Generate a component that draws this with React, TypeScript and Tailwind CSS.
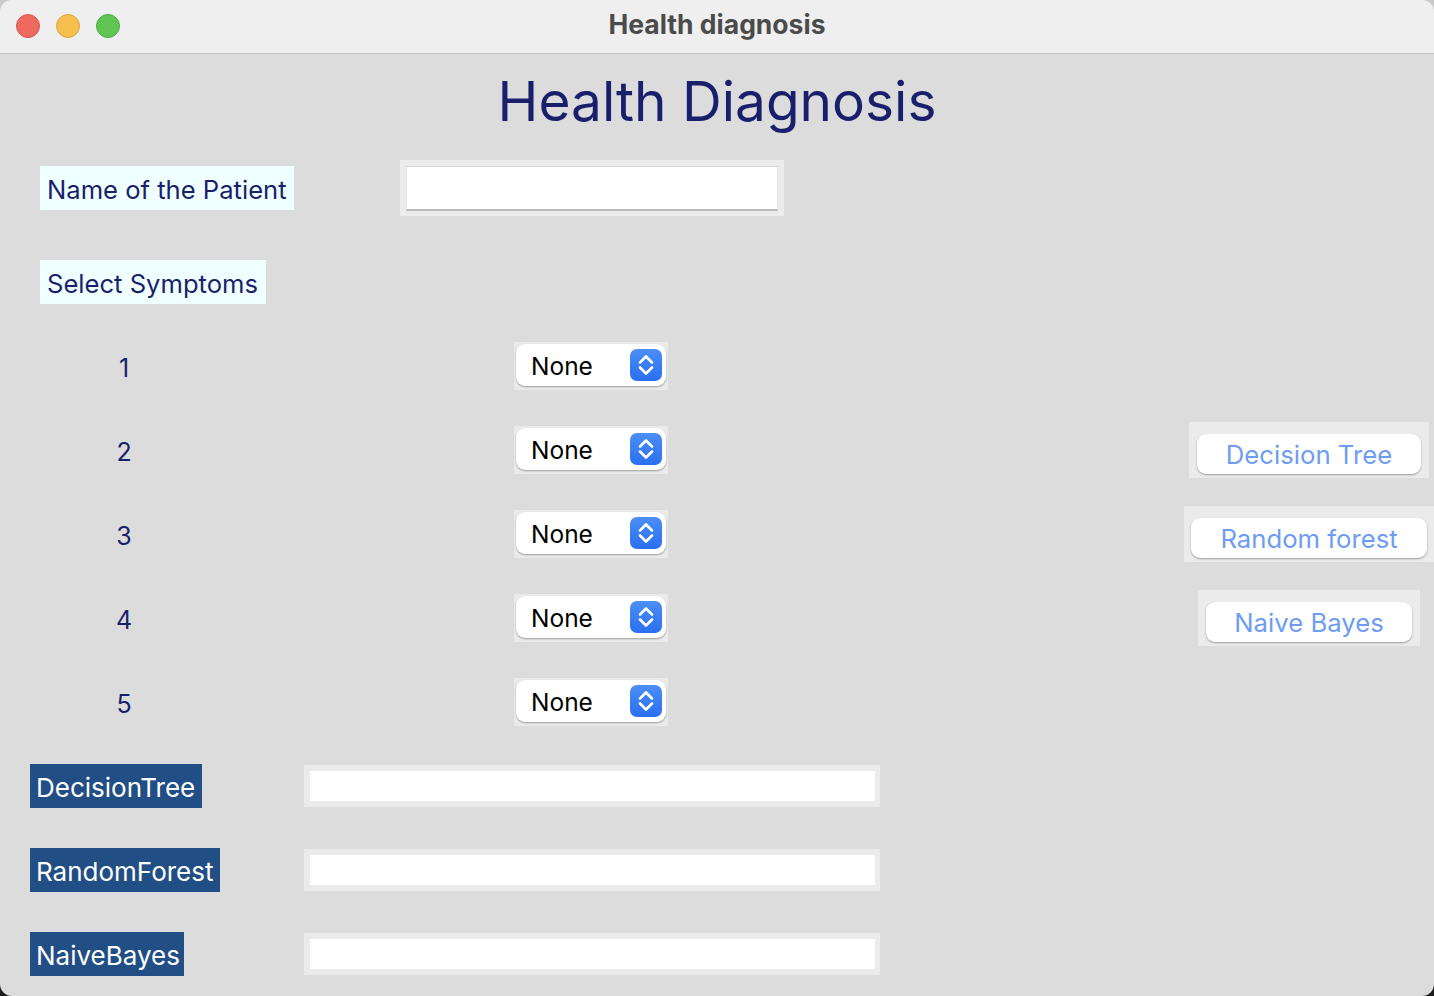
import React from "react";

const NAVY = "text-[#1a1f6c]";

function Stepper() {
  return (
    <div className="w-[32px] h-[32px] rounded-[7px] bg-[linear-gradient(to_bottom,#4b8ff7,#2a6ff0)] flex items-center justify-center">
      <svg width="20" height="26" viewBox="0 0 20 26" fill="none">
        <path d="M4 10.5 L10 4.5 L16 10.5" stroke="white" strokeWidth="2.6" strokeLinecap="round" strokeLinejoin="round" />
        <path d="M4 15.5 L10 21.5 L16 15.5" stroke="white" strokeWidth="2.6" strokeLinecap="round" strokeLinejoin="round" />
      </svg>
    </div>
  );
}

function SelectBox() {
  return (
    <div className="bg-[#ebebeb] pt-[2px] px-[2px] pb-[4px]">
      <div className="w-[150px] h-[42px] bg-white rounded-[9px] shadow-[0_1px_2px_rgba(0,0,0,0.35)] flex items-center justify-between pl-[15px] pr-[4px]">
        <span className="text-[24.5px] text-black leading-none pt-[3px]">None</span>
        <Stepper />
      </div>
    </div>
  );
}

function ActionButton({ label, outerW, innerW }: { label: string; outerW: string; innerW: string }) {
  return (
    <div className={`bg-[#ebebeb] pt-[12px] pb-[4px] flex justify-center ${outerW}`}>
      <div className={`h-[40px] bg-white rounded-[9px] shadow-[0_1px_2px_rgba(0,0,0,0.35)] flex items-center justify-center ${innerW}`}>
        <span className="text-[25.7px] text-[#6e9cf4] leading-none pt-[1px]">{label}</span>
      </div>
    </div>
  );
}

function OutputEntry() {
  return (
    <div className="bg-[#ebebeb] w-[576px] h-[42px] pt-[6px] pl-[6px] pr-[5px] pb-[6px]">
      <div className="w-full h-full bg-white" />
    </div>
  );
}

export default function App() {
  const rows = [1, 2, 3, 4, 5];
  const buttons: Record<number, { label: string; outerW: string; innerW: string }> = {
    2: { label: "Decision Tree", outerW: "w-[240px]", innerW: "w-[224px]" },
    3: { label: "Random forest", outerW: "w-[250px]", innerW: "w-[236px]" },
    4: { label: "Naive Bayes", outerW: "w-[222px]", innerW: "w-[206px]" },
  };
  const results = [
    { label: "DecisionTree", w: "w-[172px]" },
    { label: "RandomForest", w: "w-[190px]" },
    { label: "NaiveBayes", w: "w-[154px]" },
  ];
  return (
    <div
      className="w-[1434px] h-[996px] bg-[linear-gradient(to_bottom,#c9c9c9_50%,#1d1d1d_50%)] overflow-hidden"
      style={{ fontFamily: "Inter, 'Noto Sans', sans-serif" }}
    >
      <div className="w-full h-full rounded-[12px] overflow-hidden bg-[#dcdcdc] flex flex-col">
        {/* Title bar */}
        <div className="h-[54px] shrink-0 bg-[#efefef] border-b border-[#c4c4c4] relative flex items-center">
          <div className="flex items-center gap-[16px] pl-[16px] pb-[1px]">
            <div className="w-[24px] h-[24px] rounded-full bg-[#ee6a5f] border border-[#d8574c]" />
            <div className="w-[24px] h-[24px] rounded-full bg-[#f5bf4f] border border-[#dba53a]" />
            <div className="w-[24px] h-[24px] rounded-full bg-[#61c554] border border-[#4eaa42]" />
          </div>
          <div className="absolute inset-0 flex items-center justify-center pointer-events-none pb-[4px]">
            <span className="text-[26.5px] font-bold text-[#4b4b4b] leading-none">Health diagnosis</span>
          </div>
        </div>

        {/* Heading */}
        <div className="h-[92px] shrink-0 flex items-center justify-center">
          <h1 className={`text-[55px] leading-none ${NAVY} pt-[2px]`}>Health Diagnosis</h1>
        </div>

        {/* Name row */}
        <div className="h-[84px] shrink-0 flex items-center">
          <div className="ml-[40px] w-[254px] h-[44px] bg-[#f0ffff] flex items-center pl-[7px]">
            <span className={`text-[25.6px] leading-none ${NAVY} pt-[4px]`}>Name of the Patient</span>
          </div>
          <div className="ml-[106px] bg-[#ebebeb] w-[384px] h-[56px] p-[6px] pb-[5px]">
            <div className="w-full h-full bg-white border-t border-[#d6d6d6] border-b-2 border-b-[#b9b9b9] border-x border-x-[#e2e2e2]" />
          </div>
        </div>

        {/* Select symptoms row */}
        <div className="h-[84px] mt-[10px] shrink-0 flex items-center">
          <div className="ml-[40px] w-[226px] h-[44px] bg-[#f0ffff] flex items-center pl-[7px]">
            <span className={`text-[25.6px] leading-none ${NAVY} pt-[4px]`}>Select Symptoms</span>
          </div>
        </div>

        {/* Symptom rows */}
        {rows.map((n) => (
          <div key={n} className="h-[84px] shrink-0 flex items-center">
            <div className={`ml-[100px] w-[48px] text-center text-[25px] leading-none ${NAVY} pt-[5px]`}>{n}</div>
            <div className="ml-[366px]">
              <SelectBox />
            </div>
            <div className="ml-auto w-[250px] flex justify-center">
              {buttons[n] ? <ActionButton {...buttons[n]} /> : null}
            </div>
          </div>
        ))}

        {/* Result rows */}
        {results.map((r) => (
          <div key={r.label} className="h-[84px] shrink-0 flex items-center">
            <div className="w-[304px] pl-[30px] flex">
              <div className={`${r.w} h-[44px] bg-[#224e86] flex items-center pl-[6px]`}>
                <span className="text-[26px] leading-none text-white pt-[4px]">{r.label}</span>
              </div>
            </div>
            <OutputEntry />
          </div>
        ))}
      </div>
    </div>
  );
}
